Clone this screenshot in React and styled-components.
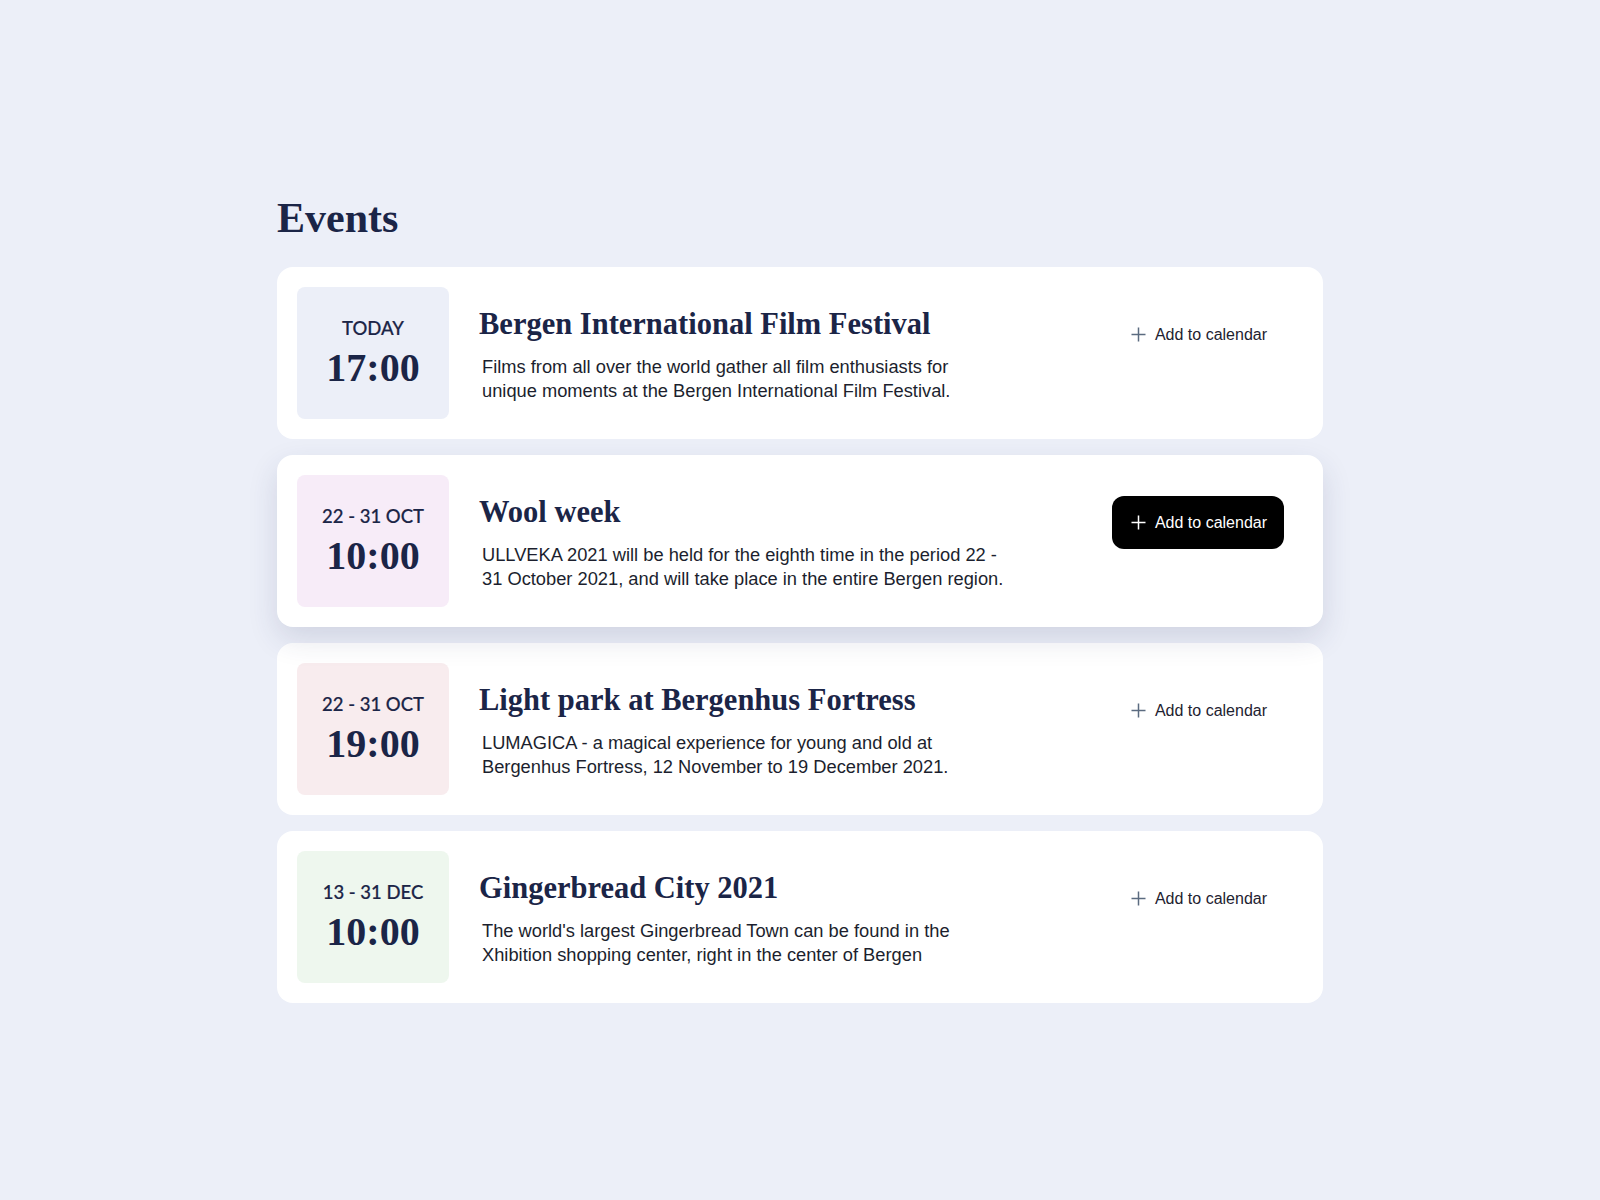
import React from 'react';
import styled, { createGlobalStyle } from 'styled-components';

const events = [
  {
    date: 'TODAY',
    time: '17:00',
    tone: '#eceff8',
    title: 'Bergen International Film Festival',
    lines: ['Films from all over the world gather all film enthusiasts for', 'unique moments at the Bergen International Film Festival.'],
  },
  {
    date: '22 - 31 OCT',
    time: '10:00',
    tone: '#f7ecf8',
    title: 'Wool week',
    lines: ['ULLVEKA 2021 will be held for the eighth time in the period 22 -', '31 October 2021, and will take place in the entire Bergen region.'],
    active: true,
  },
  {
    date: '22 - 31 OCT',
    time: '19:00',
    tone: '#f8ecee',
    title: 'Light park at Bergenhus Fortress',
    lines: ['LUMAGICA - a magical experience for young and old at', 'Bergenhus Fortress, 12 November to 19 December 2021.'],
  },
  {
    date: '13 - 31 DEC',
    time: '10:00',
    tone: '#eef7ee',
    title: 'Gingerbread City 2021',
    lines: ["The world's largest Gingerbread Town can be found in the", 'Xhibition shopping center, right in the center of Bergen'],
  },
];

function App() {
  return (
    <React.Fragment>
      <GlobalStyle />
      <Page>
        <Heading>Events</Heading>
        <List>
          {events.map((ev, i) => (
            <Card key={i} active={ev.active}>
              <DateBox tone={ev.tone}>
                <DateLabel>{ev.date}</DateLabel>
                <Time>{ev.time}</Time>
              </DateBox>
              <Content>
                <Title>{ev.title}</Title>
                <Desc>
                  {ev.lines[0]}
                  <br />
                  {ev.lines[1]}
                </Desc>
              </Content>
              <Action>
                <AddButton active={ev.active}>
                  <svg width="15" height="15" viewBox="0 0 15 15" fill="none">
                    <path d="M7.5 0.5v14M0.5 7.5h14" stroke="currentColor" strokeWidth="1.5" />
                  </svg>
                  Add to calendar
                </AddButton>
              </Action>
            </Card>
          ))}
        </List>
      </Page>
    </React.Fragment>
  );
}

const GlobalStyle = createGlobalStyle`
  body {
    margin: 0;
    background: #eceff8;
    font-family: "Liberation Sans", Arial, sans-serif;
  }
`;

const Page = styled.div`
  width: 1046px;
  margin: 0 auto;
  padding: 193px 0 100px;
`;

const Heading = styled.h1`
  margin: 0 0 24px;
  font-family: "Liberation Serif", serif;
  font-weight: 700;
  font-size: 42px;
  line-height: 50px;
  color: #1b2547;
`;

const List = styled.div`
  display: flex;
  flex-direction: column;
  gap: 16px;
`;

const Card = styled.div`
  position: relative;
  z-index: ${p => (p.active ? 1 : 0)};
  display: flex;
  align-items: flex-start;
  padding: 20px;
  background: #fff;
  border-radius: 16px;
  box-shadow: ${p => (p.active ? '0 12px 30px rgba(40, 50, 100, 0.14)' : 'none')};
`;

const DateBox = styled.div`
  flex: none;
  width: 152px;
  height: 132px;
  border-radius: 8px;
  background: ${p => p.tone};
  display: flex;
  flex-direction: column;
  align-items: center;
  justify-content: center;
  gap: 7px;
  color: #1b2547;
`;

const DateLabel = styled.div`
  font-family: Lato, "Liberation Sans", sans-serif;
  font-weight: 500;
  font-size: 18.5px;
  line-height: 22px;
  -webkit-text-stroke: 0.2px #1b2547;
`;

const Time = styled.div`
  font-family: "Liberation Serif", serif;
  font-weight: 700;
  font-size: 40px;
  line-height: 44px;
`;

const Content = styled.div`
  flex: 1;
  margin-left: 30px;
  padding-top: 19px;
`;

const Title = styled.h2`
  margin: 0 0 13px;
  font-family: "Liberation Serif", serif;
  font-weight: 700;
  font-size: 30.5px;
  line-height: 36px;
  color: #1b2547;
`;

const Desc = styled.p`
  margin: 0;
  padding-left: 3px;
  font-size: 18.3px;
  line-height: 23.5px;
  color: #1c1f2e;
  white-space: nowrap;
`;

const Action = styled.div`
  flex: none;
  padding: 21px 19px 0 0;
`;

const AddButton = styled.button`
  display: flex;
  align-items: center;
  gap: 9px;
  height: 53px;
  padding: 0 17px 0 19px;
  border: none;
  border-radius: 12px;
  background: ${p => (p.active ? '#000' : 'transparent')};
  color: ${p => (p.active ? '#fff' : '#1e2230')};
  font-family: "Liberation Sans", Arial, sans-serif;
  font-size: 16px;
  cursor: pointer;

  svg {
    color: ${p => (p.active ? '#fff' : '#5b6b80')};
  }
`;

export default App;
